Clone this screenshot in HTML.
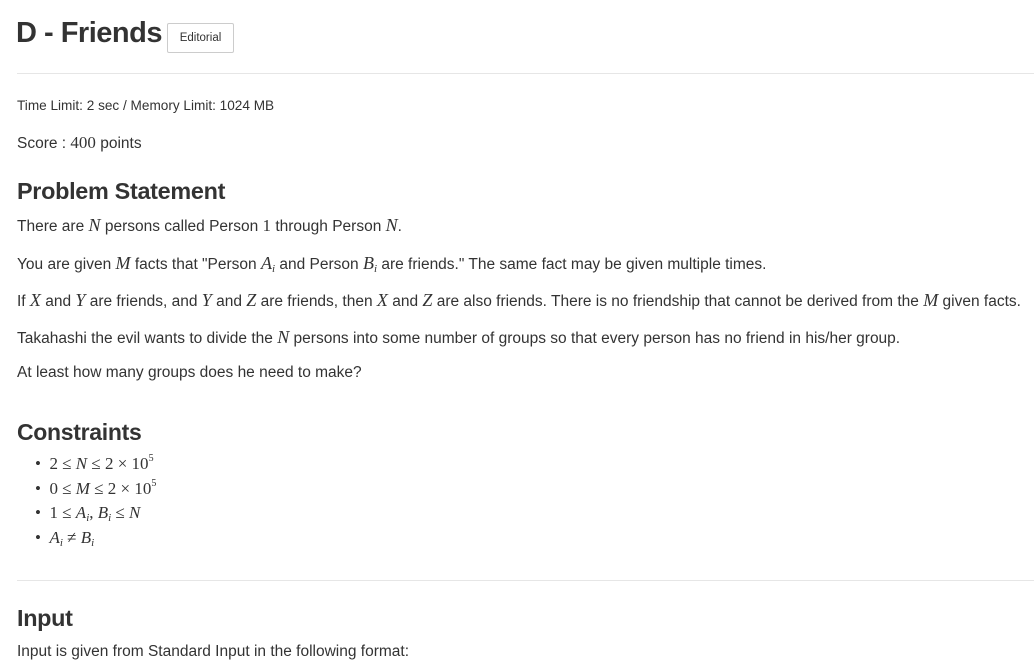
<!DOCTYPE html>
<html><head><meta charset="utf-8"><style>
body{margin:0;background:#fff;width:1034px;height:670px;overflow:hidden;font-family:"Liberation Sans",sans-serif;color:#333;}
.a{position:absolute;white-space:nowrap;}
.m{font-family:"Liberation Serif",serif;font-size:17px;}
.i{font-family:"Liberation Serif",serif;font-style:italic;font-size:18px;}
p{margin:0;font-size:15.5px;}
h3{margin:0;font-weight:bold;letter-spacing:-0.3px;}
hr{position:absolute;left:17px;width:1017px;border:0;border-top:1px solid #e6e6e6;margin:0;}
.btn{position:absolute;left:167px;top:23px;width:67px;height:30px;border:1px solid #ccc;border-radius:2px;font-size:11.5px;text-align:center;line-height:28px;box-sizing:border-box;}
sub{font-size:11px;position:relative;top:3px;vertical-align:baseline;line-height:0}
sup{font-size:10px;position:relative;top:-8px;vertical-align:baseline;line-height:0}
.c div{height:24.5px;line-height:24.5px}
</style></head><body>
<div class="a" style="left:16px;top:17px;font-size:29px;font-weight:bold;letter-spacing:-0.5px">D - Friends</div>
<div class="btn">Editorial</div>
<hr style="top:73px">
<p class="a" style="left:17px;top:98px;font-size:13.6px">Time Limit: 2 sec / Memory Limit: 1024 MB</p>
<p class="a" style="left:17px;top:133px">Score : <span class="m">400</span> points</p>
<h3 class="a" style="left:17px;top:178px;font-size:23.4px">Problem Statement</h3>
<p class="a" style="left:17px;top:215px">There are <span class="i">N</span> persons called Person <span class="m">1</span> through Person <span class="i">N</span>.</p>
<p class="a" style="left:17px;top:253px">You are given <span class="i">M</span> facts that "Person <span class="i">A<sub>i</sub></span> and Person <span class="i">B<sub>i</sub></span> are friends." The same fact may be given multiple times.</p>
<p class="a" style="left:17px;top:290px">If <span class="i">X</span> and <span class="i">Y</span> are friends, and <span class="i">Y</span> and <span class="i">Z</span> are friends, then <span class="i">X</span> and <span class="i">Z</span> are also friends. There is no friendship that cannot be derived from the <span class="i">M</span> given facts.</p>
<p class="a" style="left:17px;top:327px">Takahashi the evil wants to divide the <span class="i">N</span> persons into some number of groups so that every person has no friend in his/her group.</p>
<p class="a" style="left:17px;top:364px">At least how many groups does he need to make?</p>
<h3 class="a" style="left:17px;top:419px;font-size:23px">Constraints</h3>
<div class="a c" style="left:35px;top:452px;font-size:17px;font-family:'Liberation Serif',serif">
<div>•&nbsp;&nbsp;2 ≤ <i>N</i> ≤ 2 × 10<sup>5</sup></div>
<div>•&nbsp;&nbsp;0 ≤ <i>M</i> ≤ 2 × 10<sup>5</sup></div>
<div>•&nbsp;&nbsp;1 ≤ <i>A<sub>i</sub></i>, <i>B<sub>i</sub></i> ≤ <i>N</i></div>
<div>•&nbsp;&nbsp;<i>A<sub>i</sub></i> ≠ <i>B<sub>i</sub></i></div>
</div>
<hr style="top:580px">
<h3 class="a" style="left:17px;top:605px;font-size:23.4px">Input</h3>
<p class="a" style="left:17px;top:643px">Input is given from Standard Input in the following format:</p>
</body></html>
